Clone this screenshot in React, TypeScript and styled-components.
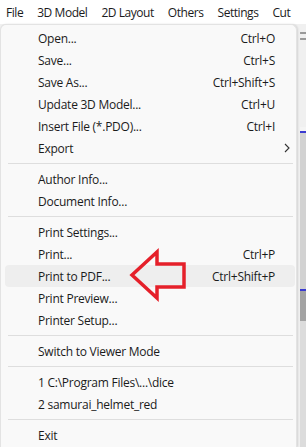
import styled, { createGlobalStyle } from "styled-components";

const GlobalStyle = createGlobalStyle`
    html, body {
        margin: 0;
        padding: 0;
        background: #f0f0f0;
        overflow: hidden;
    }
    body {
        font-family: "Open Sans", "Noto Sans", "Liberation Sans", sans-serif;
        font-size: 12px;
        color: #1b1b1b;
    }
`;

const Page = styled.div`
    width: 306px;
    height: 447px;
    display: flex;
    flex-direction: column;
    position: relative;
    overflow: hidden;
`;

const MenuBar = styled.div`
    height: 24px;
    display: flex;
    align-items: center;
    background: #ffffff;
    padding-left: 1px;
    gap: 14px;
    white-space: nowrap;
`;

const BarItem = styled.span`
    padding: 0 0 0 5px;
    letter-spacing: -0.45px;
    &:not(:first-child) {
        padding-left: 0;
    }
`;

const Body = styled.div`
    flex: 1;
    display: flex;
    min-height: 0;
`;

const Dropdown = styled.div`
    width: 295px;
    background: #f9f9f9;
    border: 1px solid #e3e3e3;
    border-bottom: none;
    border-radius: 6px 6px 0 0;
    box-shadow: 1px 0 2px rgba(0, 0, 0, 0.12);
    padding-top: 2px;
    display: flex;
    flex-direction: column;
`;

const Row = styled.div<{ $hover?: boolean }>`
    height: 22px;
    margin: 0 1px 0 4px;
    padding: 0 0 0 33px;
    display: grid;
    grid-template-columns: 1fr auto 20px;
    align-items: center;
    border-radius: 4px;
    background: ${props => (props.$hover ? "#eeeeee" : "transparent")};
    letter-spacing: -0.25px;
    white-space: nowrap;
`;

const Shortcut = styled.span`
    text-align: right;
`;

const Chevron = styled.span`
    display: flex;
    justify-content: center;
    padding-left: 3px;
`;

const Separator = styled.div`
    height: 1px;
    background: #dedede;
    margin: 4px 3px 4px 7px;
`;

const Side = styled.div`
    flex: 1;
    display: flex;
    flex-direction: column;
    padding-left: 3px;
    padding-top: 8px;
    gap: 4px;
`;

const ToolButton = styled.div<{ $dark?: boolean }>`
    height: 12px;
    border-radius: 3px 0 0 3px;
    background: ${props => (props.$dark ? "#8f8f8f" : "#f4f4f4")};
    border: 1px solid #9a9a9a;
    border-right: none;
`;

const Scroll = styled.div`
    margin-top: 83px;
    flex: 1;
    display: flex;
    flex-direction: column;
`;

const ScrollPart = styled.div<{ $h: string; $bg: string; $edge?: boolean }>`
    height: ${props => props.$h};
    background: ${props => props.$bg};
    border-top: ${props => (props.$edge ? "2px solid #3a3ad0" : "none")};
`;

const ArrowMark = styled.svg`
    position: absolute;
    left: 127px;
    top: 248px;
    width: 64px;
    height: 56px;
    pointer-events: none;
`;

type Item = { label: string; shortcut?: string; sub?: boolean; hover?: boolean } | "sep";

const items: Item[] = [
    { label: "Open...", shortcut: "Ctrl+O" },
    { label: "Save...", shortcut: "Ctrl+S" },
    { label: "Save As...", shortcut: "Ctrl+Shift+S" },
    { label: "Update 3D Model...", shortcut: "Ctrl+U" },
    { label: "Insert File (*.PDO)...", shortcut: "Ctrl+I" },
    { label: "Export", sub: true },
    "sep",
    { label: "Author Info..." },
    { label: "Document Info..." },
    "sep",
    { label: "Print Settings..." },
    { label: "Print...", shortcut: "Ctrl+P" },
    { label: "Print to PDF...", shortcut: "Ctrl+Shift+P", hover: true },
    { label: "Print Preview..." },
    { label: "Printer Setup..." },
    "sep",
    { label: "Switch to Viewer Mode" },
    "sep",
    { label: "1 C:\\Program Files\\...\\dice" },
    { label: "2 samurai_helmet_red" },
    "sep",
    { label: "Exit" },
];

const App = () => {
    return (
        <Page>
            <GlobalStyle />
            <MenuBar>
                {["File", "3D Model", "2D Layout", "Others", "Settings", "Cut"].map(m => (
                    <BarItem key={m}>{m}</BarItem>
                ))}
            </MenuBar>
            <Body>
                <Dropdown>
                    {items.map((it, i) =>
                        it === "sep" ? (
                            <Separator key={i} />
                        ) : (
                            <Row key={i} $hover={it.hover}>
                                <span>{it.label}</span>
                                <Shortcut>{it.shortcut}</Shortcut>
                                <Chevron>
                                    {it.sub && (
                                        <svg width="6" height="10" viewBox="0 0 6 10">
                                            <path d="M1 1 L5 5 L1 9" fill="none" stroke="#333" strokeWidth="1.1" />
                                        </svg>
                                    )}
                                </Chevron>
                            </Row>
                        )
                    )}
                </Dropdown>
                <Side>
                    <ToolButton $dark />
                    <ToolButton />
                    <Scroll>
                        <ScrollPart $h="4px" $bg="#f4f4f4" />
                        <ScrollPart $h="156px" $bg="#d2d2d2" $edge />
                        <ScrollPart $h="30px" $bg="#a3a3a3" $edge />
                        <ScrollPart $h="200px" $bg="#dcdcdc" />
                    </Scroll>
                </Side>
            </Body>
            <ArrowMark viewBox="0 0 64 56">
                <path
                    d="M5 27 L30 4 L30 16 L57 16 L57 39 L30 39 L30 50 Z"
                    fill="none"
                    stroke="#e5202a"
                    strokeWidth="3.5"
                    strokeLinejoin="miter"
                />
            </ArrowMark>
        </Page>
    );
};

export default App;
